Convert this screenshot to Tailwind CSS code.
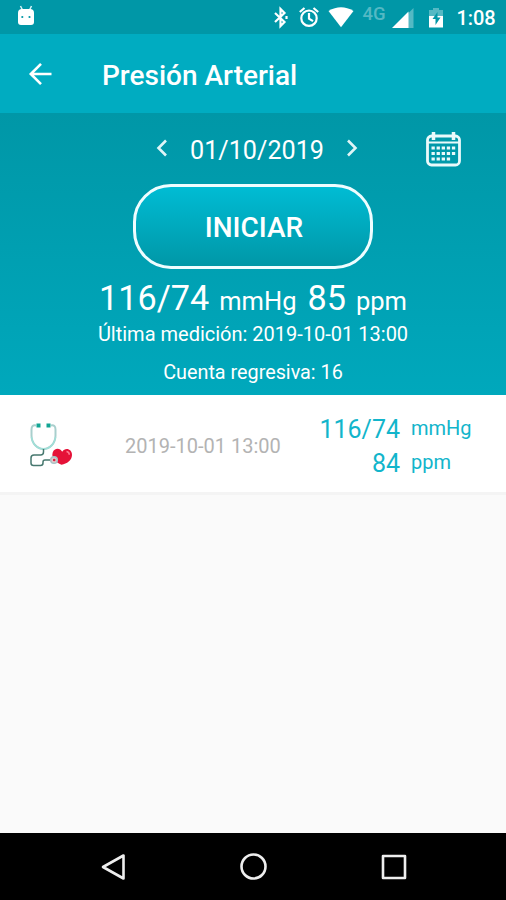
<!DOCTYPE html>
<html lang="es">
<head>
  <meta charset="UTF-8">
  <title>Presión Arterial</title>
  <script src="https://cdn.jsdelivr.net/npm/@tailwindcss/browser@4"></script>
</head>
<body class="bg-[#fafafa] font-['Roboto',sans-serif] w-[506px] h-[900px] overflow-hidden flex flex-col whitespace-nowrap">
  <!-- status bar -->
  <div class="h-[34px] shrink-0 bg-[#0097a7] flex items-center pl-[17px] text-white">
    <svg class="w-[18px] h-[22px] -mt-1" viewBox="0 0 18 22">
      <path d="M3.5 2l2 4M14.5 2l-2 4" stroke="#d5f3f6" stroke-width="1.5"/>
      <path d="M1 9q0-4 4-4h8q4 0 4 4v9q0 3-3 3H4q-3 0-3-3z" fill="#fff"/>
      <circle cx="5.3" cy="13" r="1.1" fill="#0097a7"/><circle cx="12.5" cy="13" r="1.1" fill="#0097a7"/>
    </svg>
    <svg class="ml-auto w-[234px] h-[34px]" viewBox="272 0 234 34">
      <path d="M275 13l9.500 9-4 4V9l4 4-9.500 9M286.500 16v3" fill="none" stroke="#fff" stroke-width="2.200"/>
      <g fill="none" stroke="#fff" stroke-width="2.200">
        <circle cx="309" cy="18.200" r="7.700"/>
        <path d="M309 13v5.600l4 2.500M299.800 12l4.700-4M318.200 12l-4.700-4"/>
      </g>
      <path d="M328.500 11q12.500-7.500 25 0L341 27.300z" fill="#fff"/>
      <path d="M413.500 8v20H408V13.500z" fill="#54b9c4"/>
      <path d="M392 28l16.500-16.500V28z" fill="#fff"/>
      <path d="M433 8h6v2h4v8h-14v-8h4z" fill="#54b9c4"/>
      <path d="M429 16h14v11.500h-14z" fill="#fff"/>
      <path d="M437.500 12l-5 7h3v6l5-7.500h-3z" fill="#0097a7"/>
      <text x="362.500" y="19.500" font-size="18.500" font-weight="500" fill="#54b9c4">4G</text>
      <text x="456.500" y="25" font-size="20" font-weight="500" fill="#fff" textLength="39">1:08</text>
    </svg>
  </div>
  <!-- app bar -->
  <div class="h-[79px] shrink-0 bg-[#00acc1] flex items-center pl-7 text-white">
    <svg class="w-6 h-6" viewBox="0 0 24 24" fill="none" stroke="#fff" stroke-width="2.600">
      <path d="M23.500 12H3M13 1.800L2.800 12 13 22.200"/>
    </svg>
    <h1 class="ml-[50px] mt-[5px] text-[28px] leading-8 font-medium">Presión Arterial</h1>
  </div>
  <!-- summary -->
  <div class="h-[282px] shrink-0 bg-linear-to-b from-[#0097a7] to-[#00a8bc] flex flex-col items-center text-white">
    <div class="w-full h-[71px] pt-[5px] flex items-center pl-[155px]">
      <svg class="w-3.5 h-5 -mt-1.5" viewBox="0 0 14 20" fill="none" stroke="#dff5f7" stroke-width="2.600"><path d="M11 2.500L3.500 10l7.500 7.500"/></svg>
      <span class="ml-[21px] w-[134px] text-[25.200px] leading-8">01/10/2019</span>
      <svg class="ml-[21px] w-3.5 h-5 -mt-1.5" viewBox="0 0 14 20" fill="none" stroke="#dff5f7" stroke-width="2.600"><path d="M3 2.500l7.500 7.500L3 17.500"/></svg>
      <svg class="ml-[66px] -mt-1 w-9 h-9" viewBox="0 0 36 36" fill="none" stroke="#eafafb">
        <rect x="2.500" y="5" width="32" height="29" rx="4" stroke-width="2.800"/>
        <path d="M3 11.500h31" stroke-width="2"/>
        <path d="M8.500 1v8M28.500 1v8" stroke-width="3.500"/>
        <path d="M6.500 17h24M6.500 22.500h24M6.500 28h19" stroke-width="3.200" stroke-dasharray="3.300 1.800"/>
      </svg>
    </div>
    <button class="w-[240px] h-[85px] rounded-[38px] border-3 border-[#effdff] bg-linear-to-b from-[#00bcd4] to-[#0097a7] text-[28px] font-medium pt-0.5 pl-0.5">INICIAR</button>
    <div class="mt-3 h-[34px] leading-[34px] flex items-baseline text-[34.200px]">
      <span>116/74</span>
      <span class="ml-2.5 text-[25.500px]">mmHg</span>
      <span class="ml-[11px]">85</span>
      <span class="ml-2.5 text-[25.500px]">ppm</span>
    </div>
    <p class="mt-[5px] text-[20px] leading-[28px]">Última medición: 2019-10-01 13:00</p>
    <p class="mt-[11px] text-[19.800px] leading-[28px]">Cuenta regresiva: 16</p>
  </div>
  <!-- measurement -->
  <div class="h-[100px] shrink-0 bg-white border-b-3 border-[#f4f4f4] flex items-center pl-[27px]">
    <svg class="mt-[3px] w-[50px] h-[50px]" viewBox="27 420 50 50" fill="none">
      <path d="M36 425.500q-4.500-1-4.500 4v6c0 8 6 13.500 12 13.500s12-5.500 12-13.500v-6q0-5-4.500-4" stroke="#a9cfcd" stroke-width="2"/>
      <path d="M31.500 437c1 8 6.500 12 12 12s11-4 12-12" stroke="#9fe0d8" stroke-width="1.500"/>
      <path d="M36.500 425.500h4M46.500 425.500h4" stroke="#12a594" stroke-width="4"/>
      <path d="M43.500 449v3q0 3-3 3H34q-3 0-3 3v5q0 2.500 2.500 2.500h7q2.500 0 2.500-2.500V462q0-2 2-2h7" stroke="#47786f" stroke-width="1.500"/>
      <path d="M61.500 464.800c-6-2.500-10.500-6.800-8.800-12.300 1.500-4.500 7.300-5 9.500-.7 3-4.800 10-2.800 9.800 3.200-.2 5.500-5 8.800-10.500 9.800z" fill="#e51238"/>
      <path d="M66.500 451.500q2.800.5 2.800 3.200" stroke="#ff7a92" stroke-width="1.500"/>
      <circle cx="54" cy="460" r="3.300" fill="#e6c8cb" stroke="#a5c4c6" stroke-width="1.500"/>
      <circle cx="54.200" cy="460" r="1.300" fill="#d8203f"/>
    </svg>
    <span class="ml-12 mt-1 w-[157px] text-xl text-[#b3b3b3]">2019-10-01 13:00</span>
    <div class="ml-9 mt-1.5 grid grid-cols-[82px_auto] gap-x-[11px] items-center text-[25px] leading-[34px] text-[#12b5cb]">
      <span class="text-right">116/74</span>
      <span class="-mt-[3px] text-xl leading-[34px]">mmHg</span>
      <span class="text-right">84</span>
      <span class="-mt-[3px] text-xl leading-[34px]">ppm</span>
    </div>
  </div>
  <!-- navigation bar -->
  <div class="mt-auto h-[67px] shrink-0 bg-black flex items-center justify-between pl-[100px] pr-[98px]">
    <svg class="w-7 h-7" viewBox="0 0 28 28" fill="none" stroke="#eee" stroke-width="2.600" stroke-linejoin="round"><path d="M23.500 2.500v23L3 14z"/></svg>
    <svg class="w-7 h-7" viewBox="0 0 28 28" fill="none" stroke="#eee" stroke-width="2.600"><circle cx="13.500" cy="13.500" r="12"/></svg>
    <svg class="w-7 h-7" viewBox="0 0 28 28" fill="none" stroke="#eee" stroke-width="2.600" stroke-linejoin="round"><rect x="3" y="3" width="22" height="22"/></svg>
  </div>
</body>
</html>
